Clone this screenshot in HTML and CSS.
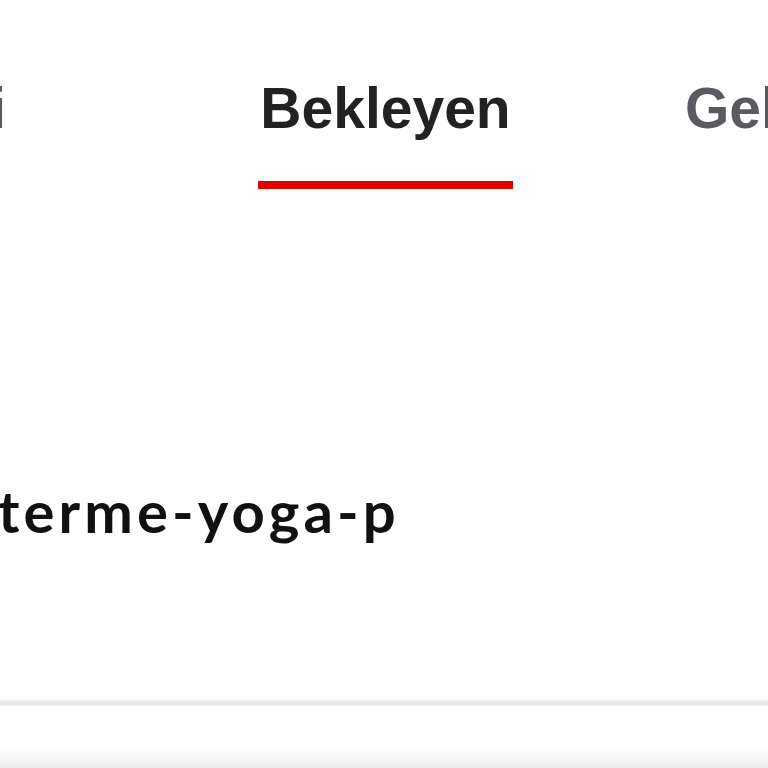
FILE: index.html
```html
<!DOCTYPE html>
<html lang="tr">
<head>
<meta charset="utf-8">
<title>Bekleyen</title>
<link rel="stylesheet" href="styles.css">
</head>
<body>
<div class="page">
  <nav class="tabs">
    <div class="tab tab-prev"><span class="tab-label">Geçmişi</span></div>
    <div class="tab tab-active"><span class="tab-label">Bekleyen</span><span class="tab-bar"></span></div>
    <div class="tab tab-next"><span class="tab-label">Gelecek</span></div>
  </nav>
  <div class="content">
    <p class="slug">terme-yoga-p</p>
  </div>
  <div class="divider"></div>
  <div class="footer"></div>
</div>
</body>
</html>
```

FILE: styles.css
```css
html, body {
  margin: 0;
  padding: 0;
  background: #ffffff;
}
.page {
  width: 768px;
  height: 768px;
  overflow: hidden;
  display: flex;
  flex-direction: column;
}
.tabs {
  display: flex;
  align-items: flex-start;
  padding-top: 74px;
  height: 115px;
  box-sizing: content-box;
}
.tab {
  display: flex;
  flex-direction: column;
  align-items: center;
  white-space: nowrap;
  font-family: "Liberation Sans", Arial, sans-serif;
  font-weight: 700;
  font-size: 57px;
  line-height: 68px;
  color: #5b5a61;
}
.tab-prev {
  width: 6px;
  align-items: flex-end;
}
.tab-active {
  width: 255px;
  margin-left: 252px;
  color: #222222;
}
.tab-bar {
  display: block;
  width: 255px;
  height: 8px;
  margin-top: 39px;
  background: #e00000;
}
.tab-next {
  margin-left: 172px;
  align-items: flex-start;
}
.content {
  height: 511px;
  display: flex;
  flex-direction: column;
}
.slug {
  margin: 290px 0 0 -2px;
  font-family: "Lato", "DejaVu Sans", sans-serif;
  font-weight: 700;
  font-size: 58px;
  line-height: 64px;
  letter-spacing: 4.1px;
  color: #111111;
  white-space: nowrap;
}
.divider {
  height: 6px;
  background: linear-gradient(#f2f2f2, #e4e4e4 50%, #eeeeee);
}
.footer {
  flex: 1;
  background: linear-gradient(#ffffff 0%, #ffffff 65%, #f6f6f6 85%, #ebebeb 100%);
}
```
